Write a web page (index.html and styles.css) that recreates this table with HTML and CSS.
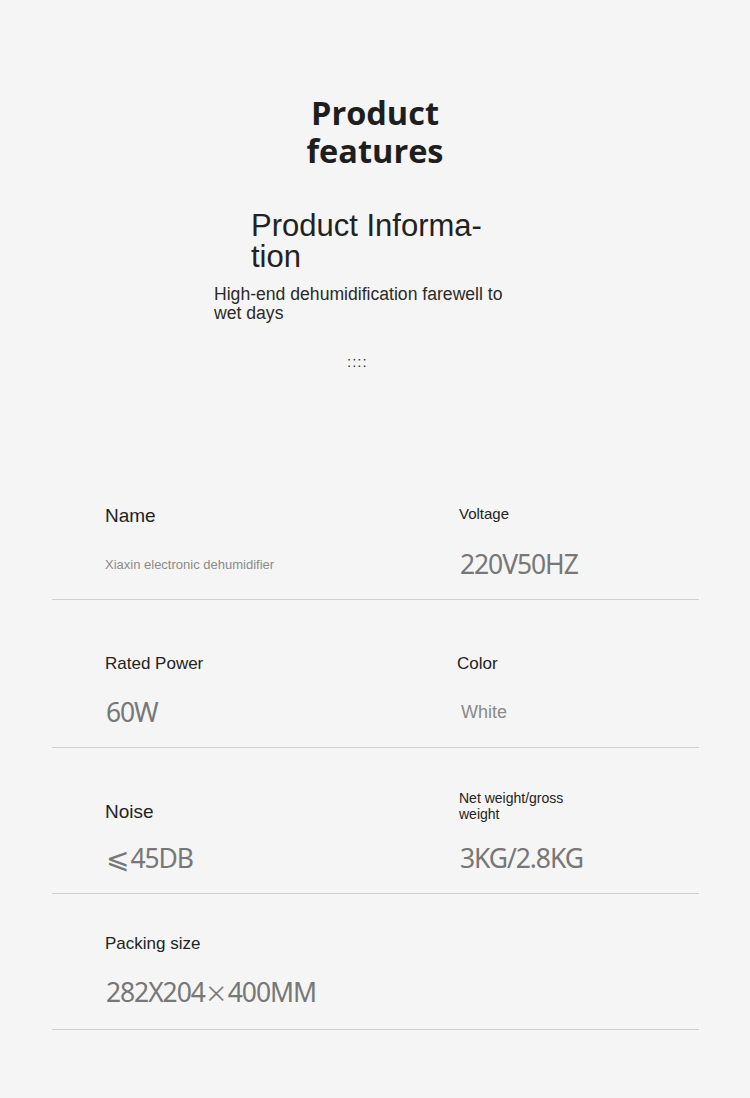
FILE: index.html
```html
<!DOCTYPE html>
<html lang="en">
<head>
<meta charset="utf-8">
<title>Product features</title>
<link rel="stylesheet" href="styles.css">
</head>
<body>
<header class="intro">
  <h1 class="intro-title">Product features</h1>
  <h2 class="intro-heading">Product Informa&shy;tion</h2>
  <p class="intro-sub">High-end dehumidification farewell to wet days</p>
  <div class="intro-dots">::::</div>
</header>
<section class="specs">
  <div class="spec-row">
    <div class="spec">
      <div class="spec-label label-lg">Name</div>
      <div class="spec-value value-sm">Xiaxin electronic dehumidifier</div>
    </div>
    <div class="spec">
      <div class="spec-label label-sm">Voltage</div>
      <div class="spec-value value-lg">220V50HZ</div>
    </div>
  </div>
  <div class="spec-row">
    <div class="spec">
      <div class="spec-label label-md">Rated Power</div>
      <div class="spec-value value-lg">60W</div>
    </div>
    <div class="spec spec-shift">
      <div class="spec-label label-md">Color</div>
      <div class="spec-value value-md">White</div>
    </div>
  </div>
  <div class="spec-row spec-row-mid">
    <div class="spec">
      <div class="spec-label label-lg">Noise</div>
      <div class="spec-value value-lg value-up"><span class="sym sym-le">⩽</span>45DB</div>
    </div>
    <div class="spec">
      <div class="spec-label label-xs">Net weight/gross weight</div>
      <div class="spec-value value-lg value-up">3KG/2.8KG</div>
    </div>
  </div>
  <div class="spec-row spec-row-last">
    <div class="spec">
      <div class="spec-label label-md">Packing size</div>
      <div class="spec-value value-lg">282X204<span class="sym">×</span>400MM</div>
    </div>
    <div class="spec"></div>
  </div>
</section>
</body>
</html>
```

FILE: styles.css
```css
html, body {
  margin: 0;
  padding: 0;
  background: #f5f5f5;
}
body {
  width: 750px;
  min-height: 1098px;
  font-family: "Liberation Sans", Arial, sans-serif;
  color: #222;
}
.intro {
  padding-top: 94px;
  display: flex;
  flex-direction: column;
}
.intro-title {
  margin: 0 auto;
  width: 170px;
  text-align: center;
  font-family: "Open Sans", "Noto Sans", sans-serif;
  font-weight: 700;
  font-size: 32.5px;
  line-height: 38px;
  color: #1e1e1e;
}
.intro-heading {
  margin: 40px 0 0 251px;
  width: 262px;
  font-weight: 400;
  font-size: 31px;
  line-height: 31px;
  color: #222;
}
.intro-sub {
  margin: 13px 0 0 214px;
  width: 312px;
  font-size: 17.6px;
  line-height: 19px;
  color: #2a2a2a;
}
.intro-dots {
  margin: 31px 0 0 347px;
  font-size: 15px;
  line-height: 16px;
  letter-spacing: 1px;
  color: #333;
}
.specs {
  margin: 82px 51px 0 52px;
}
.spec-row {
  display: grid;
  grid-template-columns: 354px 1fr;
  padding: 44px 0 11px 53px;
  border-bottom: 1px solid #cfcfcf;
}
.spec-row-mid {
  padding-bottom: 9px;
}
.spec-row-last {
  padding-top: 30px;
  padding-bottom: 13px;
}
.spec {
  display: flex;
  flex-direction: column;
}
.spec-shift {
  margin-left: -2px;
}
.spec-label {
  height: 40px;
  display: flex;
  align-items: center;
  color: #222;
}
.label-lg { font-size: 19px; }
.label-md { font-size: 17px; }
.label-sm { font-size: 15px; margin-top: -6px; height: 46px; }
.label-xs { font-size: 14px; line-height: 16px; width: 130px; margin-top: -12px; height: 52px; }
.spec-value {
  margin-top: 4px;
  height: 48px;
  display: flex;
  align-items: center;
  color: #7a7a7a;
}
.value-up {
  margin-top: 2px;
  margin-bottom: 2px;
}
.value-sm { font-size: 13px; color: #8a8a8a; }
.value-md { font-size: 18px; color: #8a8a8a; padding-left: 4px; }
.value-lg {
  font-family: "Noto Sans", "Open Sans", sans-serif;
  font-size: 26.5px;
  letter-spacing: -1.1px;
  padding-left: 1px;
  color: #777;
}
.sym {
  font-family: "Noto Sans CJK SC", sans-serif;
  font-size: 23px;
  letter-spacing: 0;
}
.sym-le {
  font-family: "DejaVu Sans", sans-serif;
  font-size: 28px;
  margin-right: 1px;
}
```
